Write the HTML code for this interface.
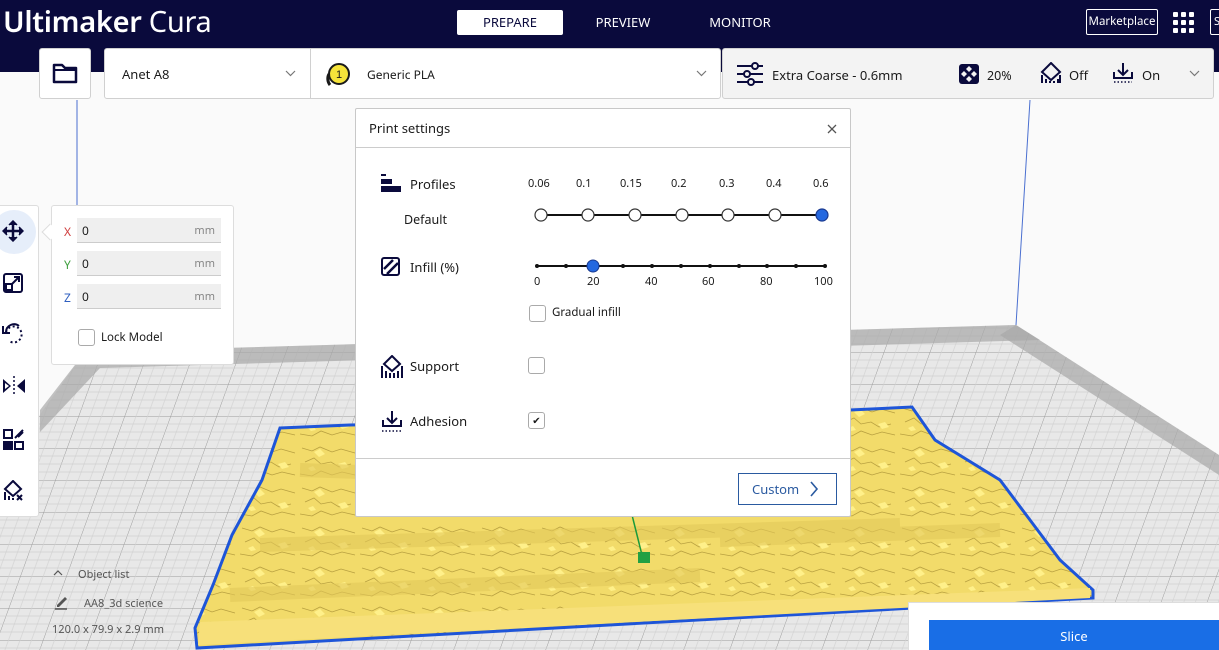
<!DOCTYPE html>
<html><head><meta charset="utf-8"><style>
*{box-sizing:border-box;margin:0;padding:0}
html,body{width:1219px;height:650px;overflow:hidden}
body{position:relative;background:#fafafa;font-family:"Noto Sans","Liberation Sans","DejaVu Sans",sans-serif;color:#1a1a1a}
.abs{position:absolute}
.top{left:0;top:0;width:1219px;height:72px;background:#0a0a3c}
.logo{left:3px;top:2px;color:#fff;font-size:29px;letter-spacing:-0.3px}
.tab{top:10px;height:25px;font-size:13px;color:#fff;text-align:center;line-height:25px}
.box{background:#fff;border:1px solid #d0d0d0;border-radius:3px}
.lbl{font-size:13px}
.inp{position:absolute;left:25px;width:144px;height:25px;background:#efefef;border-bottom:1px solid #ccc;font-size:12px;line-height:25px;padding-left:5px}
.inp span{position:absolute;right:6px;color:#888;font-size:11px}
.cb{position:absolute;width:17px;height:17px;border:1px solid #aaa;border-radius:3px;background:#fff}
.dlg{left:355px;top:108px;width:496px;height:409px;background:#fff;border:1px solid #c8c8c8;border-radius:2px}
.t{position:absolute;font-size:12px}
</style></head><body>
<svg class="abs" style="left:0;top:0" width="1219" height="650">
 <defs>
  <pattern id="g" width="46" height="32" patternUnits="userSpaceOnUse" patternTransform="skewX(-20)">
   <rect width="46" height="32" fill="#e8e8e8"/>
   <path d="M0 0H46M0 0V32" stroke="#9a9a9a" stroke-width="1"/>
   <path d="M0 8H46M0 16H46M0 24H46M11.5 0V32M23 0V32M34.5 0V32" stroke="#cfcfcf" stroke-width=".6"/>
  </pattern>
  <pattern id="tx" width="60" height="40" patternUnits="userSpaceOnUse">
   <rect width="60" height="40" fill="#f2db6a"/>
   <path d="M2 8l10 3 8-4 12 5 9-3 14 4M5 22l9-4 7 6 10-2 8 5 12-3M0 34l12 2 9-5 11 4 10-3 13 3" stroke="#b8a040" stroke-width=".8" fill="none"/>
   <path d="M14 12l6-3 5 5-6 3zM38 24l7-2 4 5-7 2zM8 28l5-2 3 4-5 1z" fill="#fff08a"/>
  </pattern>
 </defs>
 <path d="M77 100 L77 355 M1030 100 L1016 325" stroke="#4a6fd0" stroke-width="1"/>
 <polygon points="85,352 1016,325 1219,455 1219,650 0,650 0,470" fill="url(#g)"/>
 <polygon points="85,352 1016,325 1040,340 100,368 40,432 40,410" fill="#a8a8a8" opacity=".7"/>
 <polygon points="1016,325 1219,455 1219,475 1000,335" fill="#a8a8a8" opacity=".7"/>
 <polygon points="280,428 350,425 600,420 850,410 912,407 935,440 1000,480 1030,520 1060,560 1093,590 1093,598 197,648 195,628 213,585 232,535 262,480" fill="url(#tx)" stroke="#1e55d8" stroke-width="3"/>
 <polygon points="200,622 1090,588 1090,598 198,645" fill="#f7e07a"/>
 <path d="M300 470 L600 480 M260 545 L900 525 M230 595 L700 575 M720 540 L1000 530" stroke="#e3c95a" stroke-width="14" opacity=".6"/>
 <path d="M632 515 L642 555" stroke="#1a9a3a" stroke-width="1.5"/>
 <rect x="638" y="552" width="12" height="11" fill="#22a043"/>
</svg>
<div class="abs top"></div>
<div class="abs logo"><b style="font-weight:600">Ultimaker</b> Cura</div>
<div class="abs tab" style="left:457px;width:106px;background:#fff;color:#0a0a3c;border-radius:2px">PREPARE</div>
<div class="abs tab" style="left:583px;width:80px">PREVIEW</div>
<div class="abs tab" style="left:700px;width:80px">MONITOR</div>
<div class="abs" style="left:1086px;top:9px;width:72px;height:26px;border:1px solid #fff;border-radius:2px;color:#fff;font-size:11.5px;text-align:center;line-height:24px">Marketplace</div>
<svg class="abs" style="left:1173px;top:12px" width="22" height="22"><g fill="#fff"><rect x="0" y="0" width="5" height="5" rx="1"/><rect x="8" y="0" width="5" height="5" rx="1"/><rect x="16" y="0" width="5" height="5" rx="1"/><rect x="0" y="8" width="5" height="5" rx="1"/><rect x="8" y="8" width="5" height="5" rx="1"/><rect x="16" y="8" width="5" height="5" rx="1"/><rect x="0" y="16" width="5" height="5" rx="1"/><rect x="8" y="16" width="5" height="5" rx="1"/><rect x="16" y="16" width="5" height="5" rx="1"/></g></svg>
<div class="abs" style="left:1210px;top:9px;width:20px;height:26px;border:1px solid #fff;border-radius:2px;color:#fff;font-size:11px;line-height:24px;padding-left:3px">S</div>

<div class="abs box" style="left:39px;top:48px;width:52px;height:51px"></div>
<svg class="abs" style="left:52px;top:62px" width="26" height="22"><path d="M2 3h8l3 3h11v14H2z" fill="none" stroke="#0a0a3c" stroke-width="2.5" stroke-linejoin="round"/><path d="M2 8h22" stroke="#0a0a3c" stroke-width="2"/></svg>
<div class="abs box" style="left:104px;top:48px;width:617px;height:51px;border-radius:3px"></div>
<div class="abs" style="left:310px;top:48px;width:1px;height:51px;background:#d0d0d0"></div>
<div class="abs lbl" style="left:122px;top:65px">Anet A8</div>
<svg class="abs" style="left:285px;top:70px" width="11" height="7"><path d="M1 1l4.5 4.5L10 1" fill="none" stroke="#777" stroke-width="1.2"/></svg>
<svg class="abs" style="left:324px;top:61px" width="28" height="28"><circle cx="15" cy="13" r="10" fill="#f6e43a" stroke="#1a1a1a" stroke-width="2"/><path d="M5 13 A10 10 0 0 0 6 24" stroke="#1a1a1a" stroke-width="3" fill="none"/><text x="15" y="17" font-size="11" text-anchor="middle" font-family="Liberation Sans" fill="#1a1a1a">1</text></svg>
<div class="abs" style="left:367px;top:66px;font-size:12px">Generic PLA</div>
<svg class="abs" style="left:696px;top:70px" width="11" height="7"><path d="M1 1l4.5 4.5L10 1" fill="none" stroke="#777" stroke-width="1.2"/></svg>
<div class="abs" style="left:722px;top:48px;width:492px;height:51px;background:#f3f3f3;border:1px solid #d0d0d0;border-radius:3px"></div>
<svg class="abs" style="left:737px;top:62px" width="28" height="24"><g stroke="#0a0a3c" stroke-width="2" fill="none"><path d="M0 4h26M0 12h26M0 20h26"/><circle cx="18" cy="4" r="3" fill="#f3f3f3"/><circle cx="10" cy="12" r="3" fill="#f3f3f3"/><circle cx="14" cy="20" r="3" fill="#f3f3f3"/></g></svg>
<div class="abs" style="left:772px;top:66px;font-size:13px">Extra Coarse - 0.6mm</div>
<svg class="abs" style="left:959px;top:64px" width="20" height="20"><rect width="20" height="20" rx="3" fill="#0a0a3c"/><g fill="#f3f3f3"><path d="M10 2l3 3-3 3-3-3z"/><path d="M5 7l3 3-3 3-3-3z"/><path d="M15 7l3 3-3 3-3-3z"/><path d="M10 12l3 3-3 3-3-3z"/></g></svg>
<div class="abs" style="left:987px;top:67px;font-size:12.5px">20%</div>
<svg class="abs" style="left:1039px;top:62px" width="24" height="22"><path d="M12 1l9 9-9 8-9-8z" fill="none" stroke="#0a0a3c" stroke-width="2"/><path d="M3 13v8M7 17v4M11 19v2M15 19v2M19 17v4M21 13v8" stroke="#0a0a3c" stroke-width="2"/></svg>
<div class="abs" style="left:1069px;top:66px;font-size:13px">Off</div>
<svg class="abs" style="left:1112px;top:62px" width="22" height="22"><path d="M11 1v11M6 8l5 5 5-5M2 10v6h18v-6" fill="none" stroke="#0a0a3c" stroke-width="2"/><path d="M2 20h18" stroke="#0a0a3c" stroke-width="1.5" stroke-dasharray="1.5 2"/></svg>
<div class="abs" style="left:1142px;top:66px;font-size:13px">On</div>
<svg class="abs" style="left:1189px;top:70px" width="11" height="7"><path d="M1 1l4.5 4.5L10 1" fill="none" stroke="#777" stroke-width="1.2"/></svg>

<!-- left toolbar -->
<div class="abs" style="left:0;top:205px;width:39px;height:312px;background:#fff;border:1px solid #ddd;border-left:none;border-radius:0 3px 3px 0"></div>
<div class="abs" style="left:-8px;top:210px;width:44px;height:44px;border-radius:50%;background:#e6eefa"></div>
<svg class="abs" style="left:2px;top:220px" width="22" height="22"><path d="M11 2v18M2 11h18" stroke="#0a0a3c" stroke-width="2.5"/><path d="M7 5l4-4 4 4M7 17l4 4 4-4M5 7l-4 4 4 4M17 7l4 4-4 4" fill="#0a0a3c" stroke="#0a0a3c" stroke-width="1.5"/></svg>
<svg class="abs" style="left:3px;top:273px" width="20" height="20"><rect x="1" y="1" width="18" height="18" rx="2" fill="none" stroke="#0a0a3c" stroke-width="2"/><rect x="3" y="11" width="6" height="6" fill="#fff" stroke="#0a0a3c" stroke-width="2"/><path d="M9 11l7-7M11 4h5v5" fill="none" stroke="#0a0a3c" stroke-width="2"/></svg>
<svg class="abs" style="left:2px;top:322px" width="22" height="24"><path d="M4 10a8 8 0 1 1 3 9" fill="none" stroke="#0a0a3c" stroke-width="2" stroke-dasharray="2 2.5"/><path d="M4 10a8 8 0 0 1 13-6" fill="none" stroke="#0a0a3c" stroke-width="2"/><path d="M1 4v7h7" fill="none" stroke="#0a0a3c" stroke-width="2"/></svg>
<svg class="abs" style="left:2px;top:376px" width="24" height="20"><path d="M1 3v14l8-7z M23 3v14l-8-7z" fill="#0a0a3c"/><path d="M12 0v20" stroke="#0a0a3c" stroke-width="1.5" stroke-dasharray="2 2"/><path d="M3 7v6l4-3z" fill="#fff"/></svg>
<svg class="abs" style="left:3px;top:429px" width="21" height="21"><rect x="1" y="1" width="8" height="8" fill="none" stroke="#0a0a3c" stroke-width="2"/><rect x="0" y="12" width="10" height="9" fill="#0a0a3c"/><rect x="12" y="13" width="8" height="7" fill="none" stroke="#0a0a3c" stroke-width="2"/><path d="M12 9l8-8M15 8l5-5" stroke="#0a0a3c" stroke-width="2"/></svg>
<svg class="abs" style="left:3px;top:480px" width="22" height="22"><path d="M10 1l8 8-8 7-8-7z" fill="none" stroke="#0a0a3c" stroke-width="2"/><path d="M2 12v8M6 16v4M10 18v2" stroke="#0a0a3c" stroke-width="2"/><path d="M14 15l5 5M19 15l-5 5" stroke="#0a0a3c" stroke-width="2"/></svg>

<!-- move panel -->
<div class="abs" style="left:51px;top:205px;width:183px;height:160px;background:#fff;border:1px solid #ddd;border-radius:3px"></div>
<div class="abs" style="left:44px;top:226px;width:12px;height:12px;background:#fff;transform:rotate(45deg);border-left:1px solid #ddd;border-bottom:1px solid #ddd"></div>
<div class="abs" style="left:52px;top:206px;width:180px;height:155px">
 <div class="t" style="left:12px;top:17px;color:#d04040">X</div><div class="inp" style="top:12px">0<span>mm</span></div>
 <div class="t" style="left:12px;top:50px;color:#40a040">Y</div><div class="inp" style="top:45px">0<span>mm</span></div>
 <div class="t" style="left:12px;top:83px;color:#3060c0">Z</div><div class="inp" style="top:78px">0<span>mm</span></div>
 <div class="cb" style="left:26px;top:123px"></div><div class="t" style="left:49px;top:124px;font-size:11.5px">Lock Model</div>
</div>

<!-- object list -->
<svg class="abs" style="left:53px;top:570px" width="10" height="6"><path d="M1 5l4-4 4 4" fill="none" stroke="#555" stroke-width="1.2"/></svg>
<div class="abs" style="left:78px;top:567px;font-size:11px;color:#555">Object list</div>
<svg class="abs" style="left:54px;top:594px" width="16" height="16"><path d="M3 11l8-8 2 2-8 8H3z" fill="#555"/><path d="M1 15h12" stroke="#555" stroke-width="1.5"/></svg>
<div class="abs" style="left:84px;top:596px;font-size:11px;color:#555">AA8_3d science</div>
<div class="abs" style="left:52px;top:622px;font-size:11px;color:#555">120.0 x 79.9 x 2.9 mm</div>

<!-- dialog -->
<div class="abs dlg">
 <div class="t" style="left:13px;top:10px;font-size:13px">Print settings</div>
 <svg class="abs" style="left:471px;top:15px" width="10" height="10"><path d="M1 1l8 8M9 1l-8 8" stroke="#555" stroke-width="1.3"/></svg>
 <div class="abs" style="left:0;top:38px;width:494px;height:1px;background:#ccc"></div>
 <svg class="abs" style="left:25px;top:65px" width="22" height="20"><rect x="0" y="0" width="5" height="2" fill="#0a0a3c"/><rect x="0" y="5" width="11" height="5" fill="#0a0a3c"/><rect x="0" y="12" width="20" height="6" fill="#0a0a3c"/></svg>
 <div class="t" style="left:54px;top:66px;font-size:13px">Profiles</div>
 <div class="t" style="left:48px;top:102px;font-size:12.5px">Default</div>
 <div class="t" style="left:172px;top:67px;font-size:11px">0.06</div>
 <div class="t" style="left:220px;top:67px;font-size:11px">0.1</div>
 <div class="t" style="left:264px;top:67px;font-size:11px">0.15</div>
 <div class="t" style="left:315px;top:67px;font-size:11px">0.2</div>
 <div class="t" style="left:363px;top:67px;font-size:11px">0.3</div>
 <div class="t" style="left:410px;top:67px;font-size:11px">0.4</div>
 <div class="t" style="left:457px;top:67px;font-size:11px">0.6</div>
 <svg class="abs" style="left:170px;top:94px" width="310" height="25"><path d="M15 12H296" stroke="#111" stroke-width="2"/>
  <g fill="#fff" stroke="#333" stroke-width="1.2"><circle cx="15" cy="12" r="6"/><circle cx="62" cy="12" r="6"/><circle cx="109" cy="12" r="6"/><circle cx="156" cy="12" r="6"/><circle cx="202" cy="12" r="6"/><circle cx="249" cy="12" r="6"/></g><circle cx="296" cy="12" r="6" fill="#2468e0" stroke="#1a3a90" stroke-width="1.2"/></svg>
 <svg class="abs" style="left:25px;top:148px" width="20" height="20"><rect x="1" y="1" width="17" height="17" rx="2" fill="none" stroke="#0a0a3c" stroke-width="2"/><path d="M3 12l9-9M6 17l11-11" stroke="#0a0a3c" stroke-width="2.5"/></svg>
 <div class="t" style="left:54px;top:149px;font-size:13px">Infill (%)</div>
 <svg class="abs" style="left:175px;top:145px" width="300" height="20"><path d="M6 12H294" stroke="#111" stroke-width="2"/><g fill="#111"><circle cx="6" cy="12" r="2"/><circle cx="35" cy="12" r="2"/><circle cx="92" cy="12" r="2"/><circle cx="121" cy="12" r="2"/><circle cx="150" cy="12" r="2"/><circle cx="179" cy="12" r="2"/><circle cx="208" cy="12" r="2"/><circle cx="236" cy="12" r="2"/><circle cx="265" cy="12" r="2"/><circle cx="294" cy="12" r="2"/></g><circle cx="62" cy="12" r="6" fill="#2468e0" stroke="#1a3a90" stroke-width="1"/></svg>
 <div class="t" style="left:178px;top:165px;font-size:11px">0</div>
 <div class="t" style="left:231px;top:165px;font-size:11px">20</div>
 <div class="t" style="left:289px;top:165px;font-size:11px">40</div>
 <div class="t" style="left:346px;top:165px;font-size:11px">60</div>
 <div class="t" style="left:404px;top:165px;font-size:11px">80</div>
 <div class="t" style="left:458px;top:165px;font-size:11px">100</div>
 <div class="cb" style="left:173px;top:196px"></div>
 <div class="t" style="left:196px;top:196px;font-size:11.5px">Gradual infill</div>
 <svg class="abs" style="left:25px;top:246px" width="22" height="24"><path d="M11 1l8 8-8 7-8-7z" fill="none" stroke="#0a0a3c" stroke-width="2"/><path d="M1 11v12M5 16v7M9 18v5M13 18v5M17 16v7M21 11v12" stroke="#0a0a3c" stroke-width="2"/></svg>
 <div class="t" style="left:54px;top:248px;font-size:13px">Support</div>
 <div class="cb" style="left:172px;top:248px"></div>
 <svg class="abs" style="left:25px;top:301px" width="22" height="22"><path d="M11 1v11M6 8l5 5 5-5M2 10v6h18v-6" fill="none" stroke="#0a0a3c" stroke-width="2"/><path d="M1 21h20" stroke="#0a0a3c" stroke-width="1.5" stroke-dasharray="1.5 2"/></svg>
 <div class="t" style="left:54px;top:303px;font-size:13px">Adhesion</div>
 <div class="cb" style="left:172px;top:303px;font-size:10px;text-align:center;line-height:15px">&#10004;</div>
 <div class="abs" style="left:0;top:349px;width:494px;height:1px;background:#ccc"></div>
 <div class="abs" style="left:382px;top:364px;width:99px;height:32px;border:1px solid #2a5aa0;color:#2a5aa0;font-size:13px;line-height:30px;padding-left:13px">Custom</div>
 <svg class="abs" style="left:453px;top:372px" width="10" height="16"><path d="M2 1l6 7-6 7" fill="none" stroke="#2a5aa0" stroke-width="1.6"/></svg>
</div>

<!-- slice panel -->
<div class="abs" style="left:908px;top:602px;width:320px;height:60px;background:#fff;border:1px solid #ddd"></div>
<div class="abs" style="left:929px;top:620px;width:300px;height:40px;background:#196ee6;color:#fff;font-size:13px;text-align:center;line-height:32px;padding-right:10px">Slice</div>
</body></html>
